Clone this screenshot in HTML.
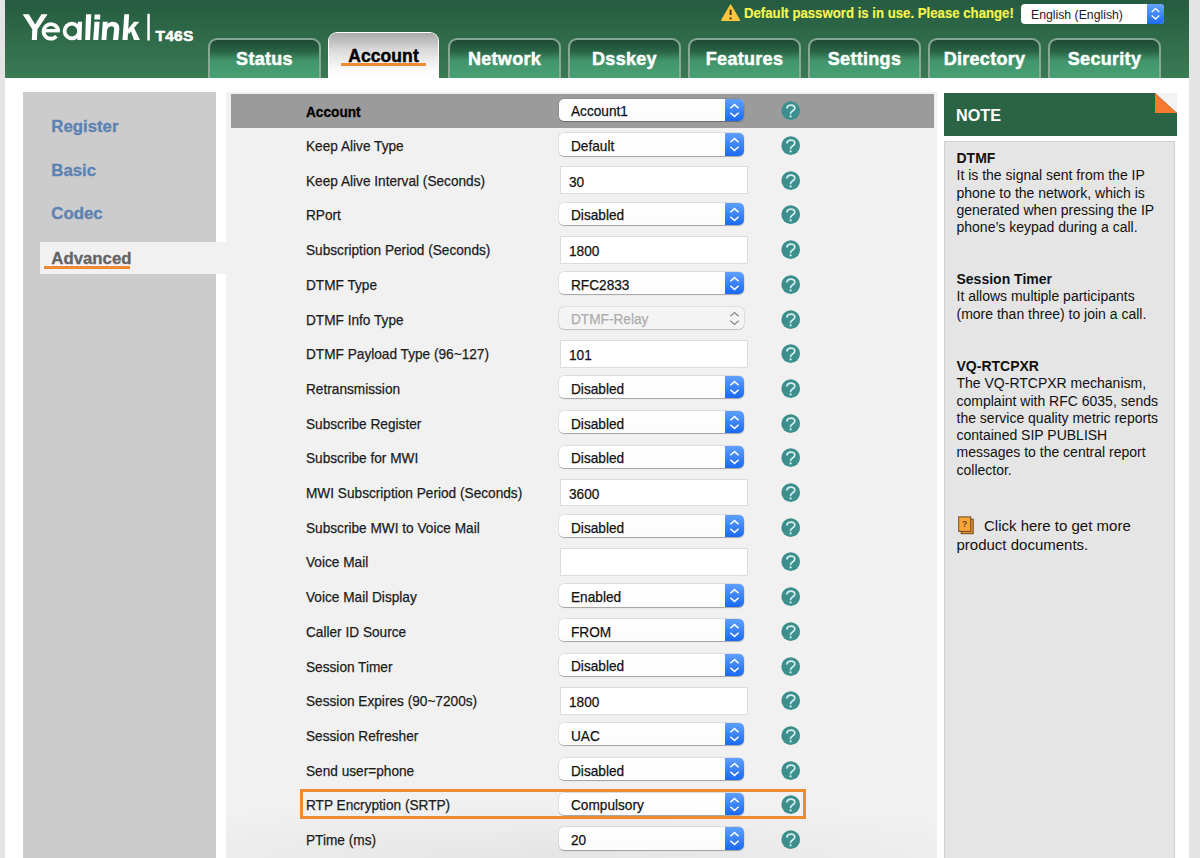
<!DOCTYPE html>
<html><head><meta charset="utf-8"><title>Yealink T46S</title>
<style>
*{box-sizing:border-box;margin:0;padding:0}
html,body{width:1200px;height:858px;overflow:hidden;background:#e4e4e4;font-family:"Liberation Sans",sans-serif}
#page{position:absolute;left:5px;top:0;width:1184px;height:858px;background:#fff;overflow:hidden}
.abs{position:absolute}
#hdr{position:absolute;left:5px;top:0;width:1184px;height:78px;background:linear-gradient(#255b40,#3a7b53)}
.model{position:absolute;left:155.6px;top:27.6px;color:#fff;font-weight:bold;font-size:15.5px;line-height:16px;letter-spacing:0.2px;-webkit-text-stroke:0.6px #fff}
.warn{position:absolute;left:743.6px;top:5.1px;color:#f7f74f;font-weight:bold;font-size:14.2px;line-height:16px;white-space:nowrap;transform:scaleX(0.93);transform-origin:0 0;-webkit-text-stroke:0.15px #f7f74f}
.wicon{position:absolute;left:720px;top:3px}
.lang{position:absolute;left:1021px;top:4px;width:143px;height:19.5px;background:#fff;border-radius:4px;overflow:hidden}
.lang span{position:absolute;left:10px;top:2.6px;font-size:13.4px;color:#222;line-height:16px;white-space:nowrap;transform:scaleX(0.915);transform-origin:0 0}
.lang b{position:absolute;right:0;top:0;width:17px;height:100%;background:linear-gradient(#64a3ff,#1c6df5)}
.tab{position:absolute;top:38px;width:113px;height:40px;background-clip:padding-box!important;border:2px solid rgba(190,205,198,0.6);border-bottom:none;border-radius:9px 9px 0 0;background:linear-gradient(#1d4a35 0%,#2a6446 30%,#42956b 55%,#48a075 100%);text-align:center}
.tab span{-webkit-text-stroke:0.45px currentColor;display:block;color:#fff;font-weight:bold;font-size:18px;letter-spacing:0.3px;line-height:20px;margin-top:9px}
.tab.act{top:32px;width:111px;height:46px;border:1px solid #fff;border-bottom:none;background:linear-gradient(#aaaaaa 0%,#dcdcdc 40%,#fafafa 80%,#fff 100%)}
.tab.act span{color:#000;font-size:17.5px;margin-top:12.6px;line-height:20px;letter-spacing:0.1px}
.tab.act i{position:absolute;left:12px;top:30px;width:85px;height:3px;background:#f08a30}
#side{position:absolute;left:22.6px;top:92.3px;width:193.4px;height:800px;background:#cccccc}
.si{position:absolute;left:51.3px;font-weight:bold;font-size:16.8px;color:#5b82b2;line-height:20px;-webkit-text-stroke:0.3px currentColor}
.si.cur{color:#636363}
.sihl{position:absolute;left:39.7px;top:241.5px;width:187px;height:32.5px;background:#f1f1f1}
.siul{position:absolute;left:43.6px;top:265.5px;width:86px;height:3px;background:#f08a30}
#main{position:absolute;left:225.5px;top:92px;width:711.2px;height:800px;background:#f1f1f1}
.hrow{position:absolute;left:231px;top:93.9px;width:702.5px;height:33.7px;background:#9b9b9b}
.lbl{-webkit-text-stroke:0.25px #1b1b1b;position:absolute;left:305.5px;height:34.68px;line-height:34.68px;font-size:15px;color:#1b1b1b;white-space:nowrap;transform:scaleX(0.91);transform-origin:0 0}
.lbl.b{font-weight:bold;color:#000;-webkit-text-stroke:0.3px #000}
.sel{position:absolute;left:559.3px;width:184.7px;height:22.3px;border-radius:5px;background:linear-gradient(#fff,#fcfcfc);box-shadow:0 0 0 0.4px rgba(0,0,0,0.12),0 0.8px 1px rgba(0,0,0,0.28);overflow:hidden}
.sel span{-webkit-text-stroke:0.25px currentColor;position:absolute;left:12px;top:0.7px;line-height:23px;font-size:15px;color:#111;white-space:nowrap;transform:scaleX(0.91);transform-origin:0 0}
.sel b{position:absolute;right:0;top:0;width:19px;height:100%;background:linear-gradient(#5fa0ff,#1a69f3)}
.sel b svg{display:block}
.sel.dis{background:#f4f4f4;box-shadow:0 0 0 0.6px rgba(0,0,0,0.12),0 0.6px 1px rgba(0,0,0,0.15)}
.sel.dis span{color:#acacac}
.sel.dis b{background:none}
.inp{position:absolute;left:560.2px;width:187.4px;height:27.8px;background:#fff;border:1px solid #dcdcdc}
.inp span{-webkit-text-stroke:0.25px currentColor;position:absolute;left:8px;top:1.25px;line-height:25.3px;font-size:15px;color:#111;white-space:nowrap;transform:scaleX(0.91);transform-origin:0 0}
.hpw{position:absolute;left:781px;width:20px;height:20px}
.hp{display:block}
.hl{position:absolute;left:300.4px;top:788.7px;width:505.8px;height:30.6px;border:3px solid #f08a31}
#nh{position:absolute;left:944px;top:92.7px;width:233px;height:43.4px;background:#2b6345}
#nh span{position:absolute;left:12px;top:13px;color:#fff;font-weight:bold;font-size:16.2px;line-height:18px}
.fold{position:absolute;left:1155px;top:92.7px}
#nb{position:absolute;left:944px;top:141.3px;width:230.6px;height:760px;background:#e5e5e5;border:1px solid #cfcfcf}
.nt{position:absolute;left:956.5px;font-size:14px;line-height:17.3px;color:#111;margin-top:1px}
.nt b{font-weight:bold}
.doc{position:absolute;left:958px;top:516px}
.more{position:absolute;left:956.5px;top:515.5px;font-size:15px;line-height:19.5px;color:#111;text-indent:27.5px;width:210px}
.shade{position:absolute;left:225.5px;top:800px;width:711.2px;height:58px;background:radial-gradient(ellipse 75% 100% at 45% 100%,rgba(0,0,0,0.05),rgba(0,0,0,0.02) 60%,rgba(0,0,0,0) 100%)}
</style></head><body>
<div id="page"></div>
<div id="hdr">
</div>
<svg class="abs" style="left:0;top:0" width="200" height="50" viewBox="0 0 200 50"><g fill="#fff">
<path d="M22.7 14.2H28.9L35.1 24.6L41.4 14.2H47.6L37.5 29.2L36.8 40H31.8L32.3 29.2Z"/>
<path d="M43.3 32.4H59.8V29H43.3Z"/>
<path d="M58.2 31A7.3 7.3 0 1 0 56.4 36.2" fill="none" stroke="#fff" stroke-width="3.7"/>
<circle cx="71.9" cy="31" r="7.3" fill="none" stroke="#fff" stroke-width="3.8"/>
<path d="M77.9 21.8H82.1L81.5 40H77.3Z"/>
<path d="M86 14.2H91.3L90 40H85.2Z"/>
<path d="M94.6 14.5H100.3L100.1 19.5H94.4Z"/>
<path d="M94.5 21.8H99.6L98.3 40H93.2Z"/>
<path d="M102.8 21.8H107.7L106.4 40H101.5Z"/>
<path d="M106 26.5C107.3 23.3 109.8 21.8 112.6 21.8C117 21.8 119.7 24.6 119.3 29L118.2 40H113L114.1 29.6C114.3 27.4 113.5 26.2 111.6 26.2C109.4 26.2 107.6 27.7 107 30Z"/>
<path d="M124.3 14.2H129.1L127.6 40H122.5Z"/>
<path d="M127.6 29.8L134 21.8H139.3L128.6 34.2Z"/>
<path d="M130.6 30.6L133.9 27.6L139.9 40H134Z"/>
<rect x="147.3" y="13.8" width="2.5" height="26.7"/>
</g></svg>
<div class="model">T46S</div>
<svg class="wicon" width="22" height="20" viewBox="0 0 22 20"><path d="M10.6 2.2L19.4 17.2H1.8Z" fill="#fcc640" stroke="#fcc640" stroke-width="1.4" stroke-linejoin="round"/><path d="M10.6 6.6V12" stroke="#4a3520" stroke-width="2"/><circle cx="10.6" cy="15.4" r="1.15" fill="#4a3520"/></svg>
<div class="warn">Default password is in use. Please change!</div>
<div class="lang"><span>English (English)</span><b><svg width="17" height="20" viewBox="0 0 17 20"><path d="M4.7 8L8.5 4.6L12.3 8M4.7 11.6L8.5 15L12.3 11.6" fill="none" stroke="#fff" stroke-width="1.4"/></svg></b></div>
<div class="tab" style="left:208px"><span>Status</span></div><div class="tab act" style="left:328px"><span>Account</span><i></i></div><div class="tab" style="left:448px"><span>Network</span></div><div class="tab" style="left:568px"><span>Dsskey</span></div><div class="tab" style="left:688px"><span>Features</span></div><div class="tab" style="left:808px"><span>Settings</span></div><div class="tab" style="left:928px"><span>Directory</span></div><div class="tab" style="left:1048px"><span>Security</span></div>
<div id="side"></div>
<div class="si" style="top:117px">Register</div>
<div class="si" style="top:160.5px">Basic</div>
<div class="si" style="top:204px">Codec</div>
<div class="sihl"></div>
<div class="si cur" style="top:249px">Advanced</div>
<div class="siul"></div>
<div id="main"></div>
<div class="shade"></div>
<div class="hrow"></div>
<div class="lbl b" style="top:94.6px">Account</div>
<div class="sel" style="top:98.75px"><span>Account1</span><b><svg width="19" height="23" viewBox="0 0 19 23"><path d="M5.3 9.3L9.5 5.6L13.7 9.3M5.3 13.7L9.5 17.4L13.7 13.7" fill="none" stroke="#fff" stroke-width="1.5"/></svg></b></div>
<div class="hpw" style="top:101.2px"><svg class="hp" width="20" height="20" viewBox="0 0 20 20"><circle cx="9.7" cy="9.7" r="9.35" fill="#3c8f8c"/><path d="M6.0 6.9C6.2 5.0 7.7 4.0 9.8 4.0C12.2 4.0 13.8 5.3 13.8 7.0C13.8 8.7 12.4 9.4 11.2 10.2C10.0 11.0 9.6 11.6 9.6 12.4" fill="none" stroke="#d3eded" stroke-width="1.75" stroke-linecap="round"/><circle cx="9.6" cy="15.4" r="1.1" fill="#d3eded"/></svg></div>
<div class="lbl" style="top:129.00px">Keep Alive Type</div>
<div class="sel" style="top:133.30px"><span>Default</span><b><svg width="19" height="23" viewBox="0 0 19 23"><path d="M5.3 9.3L9.5 5.6L13.7 9.3M5.3 13.7L9.5 17.4L13.7 13.7" fill="none" stroke="#fff" stroke-width="1.5"/></svg></b></div>
<div class="hpw" style="top:136.00px"><svg class="hp" width="20" height="20" viewBox="0 0 20 20"><circle cx="9.7" cy="9.7" r="9.35" fill="#3c8f8c"/><path d="M6.0 6.9C6.2 5.0 7.7 4.0 9.8 4.0C12.2 4.0 13.8 5.3 13.8 7.0C13.8 8.7 12.4 9.4 11.2 10.2C10.0 11.0 9.6 11.6 9.6 12.4" fill="none" stroke="#d3eded" stroke-width="1.75" stroke-linecap="round"/><circle cx="9.6" cy="15.4" r="1.1" fill="#d3eded"/></svg></div>
<div class="lbl" style="top:163.70px">Keep Alive Interval (Seconds)</div>
<div class="inp" style="top:166.40px"><span>30</span></div>
<div class="hpw" style="top:170.70px"><svg class="hp" width="20" height="20" viewBox="0 0 20 20"><circle cx="9.7" cy="9.7" r="9.35" fill="#3c8f8c"/><path d="M6.0 6.9C6.2 5.0 7.7 4.0 9.8 4.0C12.2 4.0 13.8 5.3 13.8 7.0C13.8 8.7 12.4 9.4 11.2 10.2C10.0 11.0 9.6 11.6 9.6 12.4" fill="none" stroke="#d3eded" stroke-width="1.75" stroke-linecap="round"/><circle cx="9.6" cy="15.4" r="1.1" fill="#d3eded"/></svg></div>
<div class="lbl" style="top:198.40px">RPort</div>
<div class="sel" style="top:202.70px"><span>Disabled</span><b><svg width="19" height="23" viewBox="0 0 19 23"><path d="M5.3 9.3L9.5 5.6L13.7 9.3M5.3 13.7L9.5 17.4L13.7 13.7" fill="none" stroke="#fff" stroke-width="1.5"/></svg></b></div>
<div class="hpw" style="top:205.40px"><svg class="hp" width="20" height="20" viewBox="0 0 20 20"><circle cx="9.7" cy="9.7" r="9.35" fill="#3c8f8c"/><path d="M6.0 6.9C6.2 5.0 7.7 4.0 9.8 4.0C12.2 4.0 13.8 5.3 13.8 7.0C13.8 8.7 12.4 9.4 11.2 10.2C10.0 11.0 9.6 11.6 9.6 12.4" fill="none" stroke="#d3eded" stroke-width="1.75" stroke-linecap="round"/><circle cx="9.6" cy="15.4" r="1.1" fill="#d3eded"/></svg></div>
<div class="lbl" style="top:233.10px">Subscription Period (Seconds)</div>
<div class="inp" style="top:235.80px"><span>1800</span></div>
<div class="hpw" style="top:240.10px"><svg class="hp" width="20" height="20" viewBox="0 0 20 20"><circle cx="9.7" cy="9.7" r="9.35" fill="#3c8f8c"/><path d="M6.0 6.9C6.2 5.0 7.7 4.0 9.8 4.0C12.2 4.0 13.8 5.3 13.8 7.0C13.8 8.7 12.4 9.4 11.2 10.2C10.0 11.0 9.6 11.6 9.6 12.4" fill="none" stroke="#d3eded" stroke-width="1.75" stroke-linecap="round"/><circle cx="9.6" cy="15.4" r="1.1" fill="#d3eded"/></svg></div>
<div class="lbl" style="top:267.80px">DTMF Type</div>
<div class="sel" style="top:272.10px"><span>RFC2833</span><b><svg width="19" height="23" viewBox="0 0 19 23"><path d="M5.3 9.3L9.5 5.6L13.7 9.3M5.3 13.7L9.5 17.4L13.7 13.7" fill="none" stroke="#fff" stroke-width="1.5"/></svg></b></div>
<div class="hpw" style="top:274.80px"><svg class="hp" width="20" height="20" viewBox="0 0 20 20"><circle cx="9.7" cy="9.7" r="9.35" fill="#3c8f8c"/><path d="M6.0 6.9C6.2 5.0 7.7 4.0 9.8 4.0C12.2 4.0 13.8 5.3 13.8 7.0C13.8 8.7 12.4 9.4 11.2 10.2C10.0 11.0 9.6 11.6 9.6 12.4" fill="none" stroke="#d3eded" stroke-width="1.75" stroke-linecap="round"/><circle cx="9.6" cy="15.4" r="1.1" fill="#d3eded"/></svg></div>
<div class="lbl" style="top:302.50px">DTMF Info Type</div>
<div class="sel dis" style="top:306.80px"><span>DTMF-Relay</span><b><svg width="19" height="23" viewBox="0 0 19 23"><path d="M5.3 9.3L9.5 5.6L13.7 9.3M5.3 13.7L9.5 17.4L13.7 13.7" fill="none" stroke="#8a8a8a" stroke-width="1.3"/></svg></b></div>
<div class="hpw" style="top:309.50px"><svg class="hp" width="20" height="20" viewBox="0 0 20 20"><circle cx="9.7" cy="9.7" r="9.35" fill="#3c8f8c"/><path d="M6.0 6.9C6.2 5.0 7.7 4.0 9.8 4.0C12.2 4.0 13.8 5.3 13.8 7.0C13.8 8.7 12.4 9.4 11.2 10.2C10.0 11.0 9.6 11.6 9.6 12.4" fill="none" stroke="#d3eded" stroke-width="1.75" stroke-linecap="round"/><circle cx="9.6" cy="15.4" r="1.1" fill="#d3eded"/></svg></div>
<div class="lbl" style="top:337.20px">DTMF Payload Type (96~127)</div>
<div class="inp" style="top:339.90px"><span>101</span></div>
<div class="hpw" style="top:344.20px"><svg class="hp" width="20" height="20" viewBox="0 0 20 20"><circle cx="9.7" cy="9.7" r="9.35" fill="#3c8f8c"/><path d="M6.0 6.9C6.2 5.0 7.7 4.0 9.8 4.0C12.2 4.0 13.8 5.3 13.8 7.0C13.8 8.7 12.4 9.4 11.2 10.2C10.0 11.0 9.6 11.6 9.6 12.4" fill="none" stroke="#d3eded" stroke-width="1.75" stroke-linecap="round"/><circle cx="9.6" cy="15.4" r="1.1" fill="#d3eded"/></svg></div>
<div class="lbl" style="top:371.90px">Retransmission</div>
<div class="sel" style="top:376.20px"><span>Disabled</span><b><svg width="19" height="23" viewBox="0 0 19 23"><path d="M5.3 9.3L9.5 5.6L13.7 9.3M5.3 13.7L9.5 17.4L13.7 13.7" fill="none" stroke="#fff" stroke-width="1.5"/></svg></b></div>
<div class="hpw" style="top:378.90px"><svg class="hp" width="20" height="20" viewBox="0 0 20 20"><circle cx="9.7" cy="9.7" r="9.35" fill="#3c8f8c"/><path d="M6.0 6.9C6.2 5.0 7.7 4.0 9.8 4.0C12.2 4.0 13.8 5.3 13.8 7.0C13.8 8.7 12.4 9.4 11.2 10.2C10.0 11.0 9.6 11.6 9.6 12.4" fill="none" stroke="#d3eded" stroke-width="1.75" stroke-linecap="round"/><circle cx="9.6" cy="15.4" r="1.1" fill="#d3eded"/></svg></div>
<div class="lbl" style="top:406.60px">Subscribe Register</div>
<div class="sel" style="top:410.90px"><span>Disabled</span><b><svg width="19" height="23" viewBox="0 0 19 23"><path d="M5.3 9.3L9.5 5.6L13.7 9.3M5.3 13.7L9.5 17.4L13.7 13.7" fill="none" stroke="#fff" stroke-width="1.5"/></svg></b></div>
<div class="hpw" style="top:413.60px"><svg class="hp" width="20" height="20" viewBox="0 0 20 20"><circle cx="9.7" cy="9.7" r="9.35" fill="#3c8f8c"/><path d="M6.0 6.9C6.2 5.0 7.7 4.0 9.8 4.0C12.2 4.0 13.8 5.3 13.8 7.0C13.8 8.7 12.4 9.4 11.2 10.2C10.0 11.0 9.6 11.6 9.6 12.4" fill="none" stroke="#d3eded" stroke-width="1.75" stroke-linecap="round"/><circle cx="9.6" cy="15.4" r="1.1" fill="#d3eded"/></svg></div>
<div class="lbl" style="top:441.30px">Subscribe for MWI</div>
<div class="sel" style="top:445.60px"><span>Disabled</span><b><svg width="19" height="23" viewBox="0 0 19 23"><path d="M5.3 9.3L9.5 5.6L13.7 9.3M5.3 13.7L9.5 17.4L13.7 13.7" fill="none" stroke="#fff" stroke-width="1.5"/></svg></b></div>
<div class="hpw" style="top:448.30px"><svg class="hp" width="20" height="20" viewBox="0 0 20 20"><circle cx="9.7" cy="9.7" r="9.35" fill="#3c8f8c"/><path d="M6.0 6.9C6.2 5.0 7.7 4.0 9.8 4.0C12.2 4.0 13.8 5.3 13.8 7.0C13.8 8.7 12.4 9.4 11.2 10.2C10.0 11.0 9.6 11.6 9.6 12.4" fill="none" stroke="#d3eded" stroke-width="1.75" stroke-linecap="round"/><circle cx="9.6" cy="15.4" r="1.1" fill="#d3eded"/></svg></div>
<div class="lbl" style="top:476.00px">MWI Subscription Period (Seconds)</div>
<div class="inp" style="top:478.70px"><span>3600</span></div>
<div class="hpw" style="top:483.00px"><svg class="hp" width="20" height="20" viewBox="0 0 20 20"><circle cx="9.7" cy="9.7" r="9.35" fill="#3c8f8c"/><path d="M6.0 6.9C6.2 5.0 7.7 4.0 9.8 4.0C12.2 4.0 13.8 5.3 13.8 7.0C13.8 8.7 12.4 9.4 11.2 10.2C10.0 11.0 9.6 11.6 9.6 12.4" fill="none" stroke="#d3eded" stroke-width="1.75" stroke-linecap="round"/><circle cx="9.6" cy="15.4" r="1.1" fill="#d3eded"/></svg></div>
<div class="lbl" style="top:510.70px">Subscribe MWI to Voice Mail</div>
<div class="sel" style="top:515.00px"><span>Disabled</span><b><svg width="19" height="23" viewBox="0 0 19 23"><path d="M5.3 9.3L9.5 5.6L13.7 9.3M5.3 13.7L9.5 17.4L13.7 13.7" fill="none" stroke="#fff" stroke-width="1.5"/></svg></b></div>
<div class="hpw" style="top:517.70px"><svg class="hp" width="20" height="20" viewBox="0 0 20 20"><circle cx="9.7" cy="9.7" r="9.35" fill="#3c8f8c"/><path d="M6.0 6.9C6.2 5.0 7.7 4.0 9.8 4.0C12.2 4.0 13.8 5.3 13.8 7.0C13.8 8.7 12.4 9.4 11.2 10.2C10.0 11.0 9.6 11.6 9.6 12.4" fill="none" stroke="#d3eded" stroke-width="1.75" stroke-linecap="round"/><circle cx="9.6" cy="15.4" r="1.1" fill="#d3eded"/></svg></div>
<div class="lbl" style="top:545.40px">Voice Mail</div>
<div class="inp" style="top:548.10px"><span></span></div>
<div class="hpw" style="top:552.40px"><svg class="hp" width="20" height="20" viewBox="0 0 20 20"><circle cx="9.7" cy="9.7" r="9.35" fill="#3c8f8c"/><path d="M6.0 6.9C6.2 5.0 7.7 4.0 9.8 4.0C12.2 4.0 13.8 5.3 13.8 7.0C13.8 8.7 12.4 9.4 11.2 10.2C10.0 11.0 9.6 11.6 9.6 12.4" fill="none" stroke="#d3eded" stroke-width="1.75" stroke-linecap="round"/><circle cx="9.6" cy="15.4" r="1.1" fill="#d3eded"/></svg></div>
<div class="lbl" style="top:580.10px">Voice Mail Display</div>
<div class="sel" style="top:584.40px"><span>Enabled</span><b><svg width="19" height="23" viewBox="0 0 19 23"><path d="M5.3 9.3L9.5 5.6L13.7 9.3M5.3 13.7L9.5 17.4L13.7 13.7" fill="none" stroke="#fff" stroke-width="1.5"/></svg></b></div>
<div class="hpw" style="top:587.10px"><svg class="hp" width="20" height="20" viewBox="0 0 20 20"><circle cx="9.7" cy="9.7" r="9.35" fill="#3c8f8c"/><path d="M6.0 6.9C6.2 5.0 7.7 4.0 9.8 4.0C12.2 4.0 13.8 5.3 13.8 7.0C13.8 8.7 12.4 9.4 11.2 10.2C10.0 11.0 9.6 11.6 9.6 12.4" fill="none" stroke="#d3eded" stroke-width="1.75" stroke-linecap="round"/><circle cx="9.6" cy="15.4" r="1.1" fill="#d3eded"/></svg></div>
<div class="lbl" style="top:614.80px">Caller ID Source</div>
<div class="sel" style="top:619.10px"><span>FROM</span><b><svg width="19" height="23" viewBox="0 0 19 23"><path d="M5.3 9.3L9.5 5.6L13.7 9.3M5.3 13.7L9.5 17.4L13.7 13.7" fill="none" stroke="#fff" stroke-width="1.5"/></svg></b></div>
<div class="hpw" style="top:621.80px"><svg class="hp" width="20" height="20" viewBox="0 0 20 20"><circle cx="9.7" cy="9.7" r="9.35" fill="#3c8f8c"/><path d="M6.0 6.9C6.2 5.0 7.7 4.0 9.8 4.0C12.2 4.0 13.8 5.3 13.8 7.0C13.8 8.7 12.4 9.4 11.2 10.2C10.0 11.0 9.6 11.6 9.6 12.4" fill="none" stroke="#d3eded" stroke-width="1.75" stroke-linecap="round"/><circle cx="9.6" cy="15.4" r="1.1" fill="#d3eded"/></svg></div>
<div class="lbl" style="top:649.50px">Session Timer</div>
<div class="sel" style="top:653.80px"><span>Disabled</span><b><svg width="19" height="23" viewBox="0 0 19 23"><path d="M5.3 9.3L9.5 5.6L13.7 9.3M5.3 13.7L9.5 17.4L13.7 13.7" fill="none" stroke="#fff" stroke-width="1.5"/></svg></b></div>
<div class="hpw" style="top:656.50px"><svg class="hp" width="20" height="20" viewBox="0 0 20 20"><circle cx="9.7" cy="9.7" r="9.35" fill="#3c8f8c"/><path d="M6.0 6.9C6.2 5.0 7.7 4.0 9.8 4.0C12.2 4.0 13.8 5.3 13.8 7.0C13.8 8.7 12.4 9.4 11.2 10.2C10.0 11.0 9.6 11.6 9.6 12.4" fill="none" stroke="#d3eded" stroke-width="1.75" stroke-linecap="round"/><circle cx="9.6" cy="15.4" r="1.1" fill="#d3eded"/></svg></div>
<div class="lbl" style="top:684.20px">Session Expires (90~7200s)</div>
<div class="inp" style="top:686.90px"><span>1800</span></div>
<div class="hpw" style="top:691.20px"><svg class="hp" width="20" height="20" viewBox="0 0 20 20"><circle cx="9.7" cy="9.7" r="9.35" fill="#3c8f8c"/><path d="M6.0 6.9C6.2 5.0 7.7 4.0 9.8 4.0C12.2 4.0 13.8 5.3 13.8 7.0C13.8 8.7 12.4 9.4 11.2 10.2C10.0 11.0 9.6 11.6 9.6 12.4" fill="none" stroke="#d3eded" stroke-width="1.75" stroke-linecap="round"/><circle cx="9.6" cy="15.4" r="1.1" fill="#d3eded"/></svg></div>
<div class="lbl" style="top:718.90px">Session Refresher</div>
<div class="sel" style="top:723.20px"><span>UAC</span><b><svg width="19" height="23" viewBox="0 0 19 23"><path d="M5.3 9.3L9.5 5.6L13.7 9.3M5.3 13.7L9.5 17.4L13.7 13.7" fill="none" stroke="#fff" stroke-width="1.5"/></svg></b></div>
<div class="hpw" style="top:725.90px"><svg class="hp" width="20" height="20" viewBox="0 0 20 20"><circle cx="9.7" cy="9.7" r="9.35" fill="#3c8f8c"/><path d="M6.0 6.9C6.2 5.0 7.7 4.0 9.8 4.0C12.2 4.0 13.8 5.3 13.8 7.0C13.8 8.7 12.4 9.4 11.2 10.2C10.0 11.0 9.6 11.6 9.6 12.4" fill="none" stroke="#d3eded" stroke-width="1.75" stroke-linecap="round"/><circle cx="9.6" cy="15.4" r="1.1" fill="#d3eded"/></svg></div>
<div class="lbl" style="top:753.60px">Send user=phone</div>
<div class="sel" style="top:757.90px"><span>Disabled</span><b><svg width="19" height="23" viewBox="0 0 19 23"><path d="M5.3 9.3L9.5 5.6L13.7 9.3M5.3 13.7L9.5 17.4L13.7 13.7" fill="none" stroke="#fff" stroke-width="1.5"/></svg></b></div>
<div class="hpw" style="top:760.60px"><svg class="hp" width="20" height="20" viewBox="0 0 20 20"><circle cx="9.7" cy="9.7" r="9.35" fill="#3c8f8c"/><path d="M6.0 6.9C6.2 5.0 7.7 4.0 9.8 4.0C12.2 4.0 13.8 5.3 13.8 7.0C13.8 8.7 12.4 9.4 11.2 10.2C10.0 11.0 9.6 11.6 9.6 12.4" fill="none" stroke="#d3eded" stroke-width="1.75" stroke-linecap="round"/><circle cx="9.6" cy="15.4" r="1.1" fill="#d3eded"/></svg></div>
<div class="lbl" style="top:788.30px">RTP Encryption (SRTP)</div>
<div class="sel" style="top:792.60px"><span>Compulsory</span><b><svg width="19" height="23" viewBox="0 0 19 23"><path d="M5.3 9.3L9.5 5.6L13.7 9.3M5.3 13.7L9.5 17.4L13.7 13.7" fill="none" stroke="#fff" stroke-width="1.5"/></svg></b></div>
<div class="hpw" style="top:795.30px"><svg class="hp" width="20" height="20" viewBox="0 0 20 20"><circle cx="9.7" cy="9.7" r="9.35" fill="#3c8f8c"/><path d="M6.0 6.9C6.2 5.0 7.7 4.0 9.8 4.0C12.2 4.0 13.8 5.3 13.8 7.0C13.8 8.7 12.4 9.4 11.2 10.2C10.0 11.0 9.6 11.6 9.6 12.4" fill="none" stroke="#d3eded" stroke-width="1.75" stroke-linecap="round"/><circle cx="9.6" cy="15.4" r="1.1" fill="#d3eded"/></svg></div>
<div class="lbl" style="top:823.00px">PTime (ms)</div>
<div class="sel" style="top:827.30px"><span>20</span><b><svg width="19" height="23" viewBox="0 0 19 23"><path d="M5.3 9.3L9.5 5.6L13.7 9.3M5.3 13.7L9.5 17.4L13.7 13.7" fill="none" stroke="#fff" stroke-width="1.5"/></svg></b></div>
<div class="hpw" style="top:830.00px"><svg class="hp" width="20" height="20" viewBox="0 0 20 20"><circle cx="9.7" cy="9.7" r="9.35" fill="#3c8f8c"/><path d="M6.0 6.9C6.2 5.0 7.7 4.0 9.8 4.0C12.2 4.0 13.8 5.3 13.8 7.0C13.8 8.7 12.4 9.4 11.2 10.2C10.0 11.0 9.6 11.6 9.6 12.4" fill="none" stroke="#d3eded" stroke-width="1.75" stroke-linecap="round"/><circle cx="9.6" cy="15.4" r="1.1" fill="#d3eded"/></svg></div>
<div class="hl"></div>
<div id="nh"><span>NOTE</span></div>
<svg class="fold" width="22" height="20" viewBox="0 0 22 20"><path d="M0 0H22V20Z" fill="#f3f3f3"/><path d="M0 0L22 20H0Z" fill="#f67a2e"/></svg>
<div id="nb"></div>
<div class="nt" style="top:149px"><b>DTMF</b><br>It is the signal sent from the IP<br>phone to the network, which is<br>generated when pressing the IP<br>phone&rsquo;s keypad during a call.</div>
<div class="nt" style="top:270px"><b>Session Timer</b><br>It allows multiple participants<br>(more than three) to join a call.</div>
<div class="nt" style="top:357px"><b>VQ-RTCPXR</b><br>The VQ-RTCPXR mechanism,<br>complaint with RFC 6035, sends<br>the service quality metric reports<br>contained SIP PUBLISH<br>messages to the central report<br>collector.</div>
<svg class="doc" width="18" height="19" viewBox="0 0 18 19"><rect x="3.2" y="3.2" width="12" height="14.5" fill="#e8922f" stroke="#6b4a20" stroke-width="1"/><rect x="0.7" y="0.9" width="12" height="14.5" fill="#f9a43b" stroke="#6b4a20" stroke-width="1"/><text x="6.7" y="11" font-size="8.5" font-family="Liberation Sans" font-weight="bold" fill="#6b4a20" text-anchor="middle">?</text></svg>
<div class="more">Click here to get more product documents.</div>
</body></html>
